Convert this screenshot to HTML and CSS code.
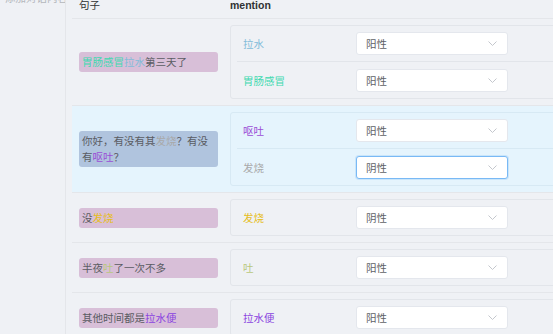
FILE: index.html
```html
<!DOCTYPE html>
<html lang="zh">
  <head>
    <meta charset="utf-8" />
    <title>实体标注</title>
    <link rel="stylesheet" href="styles.css">
  </head>

  <body>
    <div class="page">
      <aside class="sidebar">
        <p class="side-title">添加对话内容:</p>
      </aside>

      <main class="main">
        <div class="table">
          <div class="row head">
            <div class="cell">句子</div>
            <div class="cell mention-head">mention</div>
          </div>

          <div class="row">
            <div class="cell">
              <span class="tag tag-pink"><span class="c-weichang">胃肠感冒</span><span class="c-lashui">拉水</span>第三天了</span>
            </div>
            <div class="cell">
              <div class="card">
                <div class="item">
                  <span class="label c-lashui">拉水</span>
                  <div class="select"><span>阳性</span><svg width="9" height="5" viewBox="0 0 9 5"><path d="M0.5 0.5l4 4 4-4" /></svg></div>
                </div>
                <div class="item">
                  <span class="label c-weichang">胃肠感冒</span>
                  <div class="select"><span>阳性</span><svg width="9" height="5" viewBox="0 0 9 5"><path d="M0.5 0.5l4 4 4-4" /></svg></div>
                </div>
              </div>
            </div>
          </div>

          <div class="row current">
            <div class="cell">
              <span class="tag tag-blue">你好，有没有其<span class="c-fashao-gray">发烧</span>？有没有<span class="c-outu">呕吐</span>？</span>
            </div>
            <div class="cell">
              <div class="card">
                <div class="item">
                  <span class="label c-outu">呕吐</span>
                  <div class="select"><span>阳性</span><svg width="9" height="5" viewBox="0 0 9 5"><path d="M0.5 0.5l4 4 4-4" /></svg></div>
                </div>
                <div class="item">
                  <span class="label c-fashao-gray">发烧</span>
                  <div class="select focus"><span>阴性</span><svg width="9" height="5" viewBox="0 0 9 5"><path d="M0.5 0.5l4 4 4-4" /></svg></div>
                </div>
              </div>
            </div>
          </div>

          <div class="row">
            <div class="cell">
              <span class="tag tag-pink">没<span class="c-fashao-gold">发烧</span></span>
            </div>
            <div class="cell">
              <div class="card">
                <div class="item">
                  <span class="label c-fashao-gold">发烧</span>
                  <div class="select"><span>阴性</span><svg width="9" height="5" viewBox="0 0 9 5"><path d="M0.5 0.5l4 4 4-4" /></svg></div>
                </div>
              </div>
            </div>
          </div>

          <div class="row">
            <div class="cell">
              <span class="tag tag-pink">半夜<span class="c-tu">吐</span>了一次不多</span>
            </div>
            <div class="cell">
              <div class="card">
                <div class="item">
                  <span class="label c-tu">吐</span>
                  <div class="select"><span>阳性</span><svg width="9" height="5" viewBox="0 0 9 5"><path d="M0.5 0.5l4 4 4-4" /></svg></div>
                </div>
              </div>
            </div>
          </div>

          <div class="row">
            <div class="cell">
              <span class="tag tag-pink">其他时间都是<span class="c-lashuibian">拉水便</span></span>
            </div>
            <div class="cell">
              <div class="card">
                <div class="item">
                  <span class="label c-lashuibian">拉水便</span>
                  <div class="select"><span>阳性</span><svg width="9" height="5" viewBox="0 0 9 5"><path d="M0.5 0.5l4 4 4-4" /></svg></div>
                </div>
              </div>
            </div>
          </div>
        </div>
      </main>
    </div>
  </body>
</html>
```

FILE: styles.css
```css
html,
body {
  margin: 0;
  height: 100%;
  overflow: hidden;
  background: #eff1f5;
  font-family: 'Noto Sans', 'Noto Sans CJK SC', sans-serif;
  font-size: 10.5px;
  color: #606266;
}

.page {
  display: flex;
  height: 100%;
}

.sidebar {
  width: 65px;
  flex: none;
  border-right: 1px solid #e4e6ea;
  overflow: hidden;
}

.side-title {
  margin: -8px 0 0 5px;
  line-height: 12px;
  color: #b4b7bc;
  white-space: nowrap;
}

.main {
  flex: none;
  width: 720px;
  padding-left: 6px;
}

.row {
  display: grid;
  grid-template-columns: 151px 1fr;
  align-items: center;
  padding: 6px 0;
  border-bottom: 1px solid #e4e6ea;
}

.row.head {
  padding: 0 0 7px;
  line-height: 11px;
  color: #303133;
}

.mention-head {
  font-weight: bold;
  font-family: 'Liberation Sans', 'Noto Sans CJK SC', sans-serif;
}

.row.current {
  background: #e5f4fd;
}

.cell {
  padding-left: 7px;
}

.tag {
  display: block;
  width: 133px;
  padding: 2px 3px;
  line-height: 16px;
  border-radius: 3px;
  color: #5a5c63;
}

.tag-pink {
  background: #d8bfd8;
}

.tag-blue {
  background: #b0c4de;
}

.card {
  border: 1px solid #e2e5ea;
  border-radius: 3px;
  padding-left: 6px;
}

.current .card {
  border-color: #d7e9f4;
}

.item {
  display: flex;
  align-items: center;
  padding: 6px 0 6px 6px;
}

.item + .item {
  padding-top: 7px;
  border-top: 1px solid #e2e5ea;
}

.current .item + .item {
  border-top-color: #d7e9f4;
}

.label {
  width: 113px;
}

.select {
  width: 131px;
  height: 21px;
  display: flex;
  align-items: center;
  justify-content: space-between;
  padding: 0 10px 0 9px;
  background: #fff;
  border: 1px solid #e4e7ed;
  border-radius: 3px;
}

.select.focus {
  border-color: #79b9f5;
  box-shadow: 0 0 0 1px rgba(121, 185, 245, 0.25);
}

.select svg path {
  fill: none;
  stroke: #c4c7cd;
  stroke-width: 1;
}

.c-lashui { color: #82bcd9; }
.c-weichang { color: #3fd9b0; }
.c-outu { color: #9b4dd6; }
.c-fashao-gray { color: #a9a9a9; }
.c-fashao-gold { color: #e6bd22; }
.c-tu { color: #b9c87c; }
.c-lashuibian { color: #8a43e0; }
```
